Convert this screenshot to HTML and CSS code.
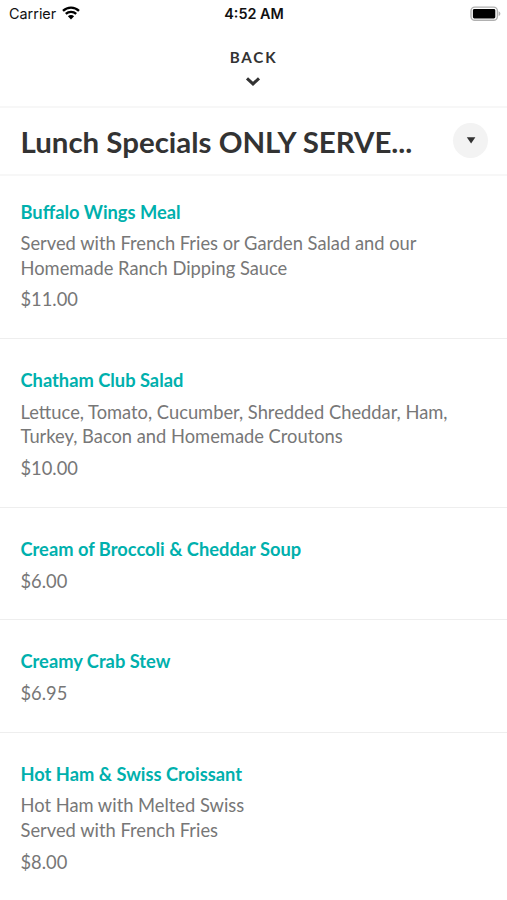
FILE: index.html
```html
<!DOCTYPE html>
<html lang="en">
<head>
    <meta charset="UTF-8">
    <meta name="viewport" content="width=device-width, initial-scale=1.0">
    <title>Lunch Specials</title>
    <link rel="stylesheet" href="styles.css">
</head>
<body>

    <div class="status-bar">
        <div class="carrier">
            <span>Carrier</span>
            <svg class="wifi" width="18" height="14" viewBox="0 0 18 14">
                <path d="M1 4.8a11.5 11.5 0 0 1 16 0M3.8 7.9a7.5 7.5 0 0 1 10.4 0" fill="none" stroke="#000" stroke-width="2.3"/>
                <path d="M9 13.4L5.9 10.3a4.4 4.4 0 0 1 6.2 0z"/>
            </svg>
        </div>
        <div class="clock">4:52 AM</div>
        <div class="power">
            <svg width="31" height="16" viewBox="0 0 31 16">
                <rect x="1" y="1.1" width="26.4" height="13.2" rx="3.8" fill="none" stroke="#b0b0b0" stroke-width="1.4"/>
                <rect x="2.9" y="3.1" width="22.4" height="9.4" rx="1.4"/>
                <path d="M28.6 5.3q1.8.7 1.8 2.4t-1.8 2.4z" fill="#b0b0b0"/>
            </svg>
        </div>
    </div>

    <header class="back">
        <span>BACK</span>
        <svg width="16" height="10" viewBox="0 0 16 10">
            <path d="M2 1.3l6 5.6 6-5.6" fill="none" stroke="#333" stroke-width="3"/>
        </svg>
    </header>

    <div class="section-title">
        <h1>Lunch Specials ONLY SERVE...</h1>
        <button type="button" aria-label="Choose section">
            <svg width="10" height="7" viewBox="0 0 10 7"><path d="M.8.3h8.6L5.1 6.5z" fill="#333"/></svg>
        </button>
    </div>

    <main class="menu">
        <div class="item">
            <h2>Buffalo Wings Meal</h2>
            <p>Served with French Fries or Garden Salad and our<br>Homemade Ranch Dipping Sauce</p>
            <div class="price">$11.00</div>
        </div>
        <div class="item">
            <h2>Chatham Club Salad</h2>
            <p>Lettuce, Tomato, Cucumber, Shredded Cheddar, Ham,<br>Turkey, Bacon and Homemade Croutons</p>
            <div class="price">$10.00</div>
        </div>
        <div class="item">
            <h2>Cream of Broccoli &amp; Cheddar Soup</h2>
            <div class="price">$6.00</div>
        </div>
        <div class="item">
            <h2>Creamy Crab Stew</h2>
            <div class="price">$6.95</div>
        </div>
        <div class="item">
            <h2>Hot Ham &amp; Swiss Croissant</h2>
            <p>Hot Ham with Melted Swiss<br>Served with French Fries</p>
            <div class="price">$8.00</div>
        </div>
    </main>

</body>
</html>
```
FILE: styles.css
```css
* {
    box-sizing: border-box;
}

body {
    font-family: Lato, sans-serif;
    margin: 0;
    background-color: #fff;
    color: #333;
    height: 900px;
    overflow: hidden;
}

.status-bar {
    display: grid;
    grid-template-columns: 1fr auto 1fr;
    align-items: center;
    height: 27px;
    padding: 0 6px 0 9px;
    font-family: Inter, sans-serif;
    font-size: 14.4px;
    color: #111;
}

.carrier {
    display: flex;
    align-items: center;
    gap: 6px;
}

.wifi {
    margin-bottom: 2px;
}

.clock {
    margin-left: -2px;
    font-weight: 600;
}

.power {
    display: flex;
    justify-content: flex-end;
}

.back {
    display: flex;
    flex-direction: column;
    align-items: center;
    height: 81px;
    padding-top: 20px;
    border-bottom: 2px solid #f7f7f7;
    font-size: 15.2px;
    font-weight: 700;
    letter-spacing: 1.8px;
    line-height: 20px;
}

.back svg {
    margin-top: 10px;
    margin-right: 2px;
}

.section-title {
    display: flex;
    align-items: center;
    justify-content: space-between;
    height: 68px;
    padding: 0 19px 1px 20.5px;
    border-bottom: 2px solid #f7f7f7;
}

h1 {
    margin: 1px 0 0;
    font-size: 29.45px;
    font-weight: 700;
    white-space: nowrap;
}

button {
    display: flex;
    align-items: center;
    justify-content: center;
    width: 35px;
    height: 35px;
    padding: 0;
    border: none;
    border-radius: 50%;
    background-color: #f3f3f3;
}

.item {
    padding: 28.8px 20.5px 26.4px;
    border-bottom: 1px solid #eee;
    font-size: 18.32px;
    line-height: 24.6px;
    color: #777;
}

.item:first-child {
    padding-top: 23.5px;
}

.item:last-child {
    border-bottom: none;
}

h2 {
    margin: 0 0 7.1px;
    font-size: 18.3px;
    font-weight: 700;
    color: #00b0ad;
}

p {
    margin: 0 0 7px;
    white-space: nowrap;
}
```
